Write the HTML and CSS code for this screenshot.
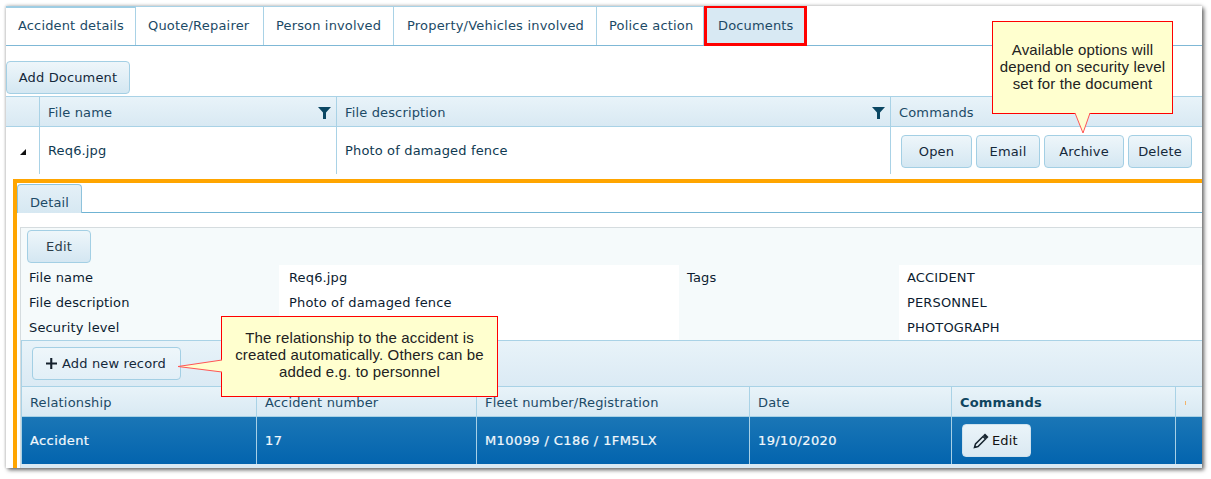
FILE: index.html
```html
<!DOCTYPE html>
<html lang="en">
<head>
<meta charset="utf-8">
<title>Documents</title>
<link rel="stylesheet" href="styles.css">
</head>
<body>
<div class="window">
  <nav class="tabs">
    <a class="tab tab-first">Accident details</a>
    <a class="tab">Quote/Repairer</a>
    <a class="tab">Person involved</a>
    <a class="tab">Property/Vehicles involved</a>
    <a class="tab">Police action</a>
    <a class="tab tab-active">Documents</a>
  </nav>
  <div class="toolbar-top"><button class="btn btn-add">Add Document</button></div>

  <div class="grid doc-grid head">
    <div class="cell"></div>
    <div class="cell filter-cell">File name
      <svg class="funnel" viewBox="0 0 13 13"><path d="M0 1h13L8 6.5V13H5V6.5z"/></svg></div>
    <div class="cell filter-cell">File description
      <svg class="funnel" viewBox="0 0 13 13"><path d="M0 1h13L8 6.5V13H5V6.5z"/></svg></div>
    <div class="cell">Commands</div>
  </div>
  <div class="grid doc-grid doc-row">
    <div class="cell expander"><svg class="arrow" viewBox="0 0 6 6"><path d="M6 0v6H0z"/></svg></div>
    <div class="cell">Req6.jpg</div>
    <div class="cell">Photo of damaged fence</div>
    <div class="cell commands">
      <button class="btn btn-open">Open</button>
      <button class="btn btn-email">Email</button>
      <button class="btn btn-archive">Archive</button>
      <button class="btn btn-delete">Delete</button>
    </div>
  </div>

  <section class="detail">
    <div class="detail-tabs"><a class="detail-tab">Detail</a></div>
    <div class="panel">
      <div class="panel-bar"><button class="btn btn-edit">Edit</button></div>
      <div class="form">
        <div class="f-label">File name</div><div class="f-value">Req6.jpg</div><div class="f-label f-tags">Tags</div><div class="f-value f-last">ACCIDENT</div>
        <div class="f-label">File description</div><div class="f-value">Photo of damaged fence</div><div class="f-label f-tags"></div><div class="f-value f-last">PERSONNEL</div>
        <div class="f-label">Security level</div><div class="f-value"></div><div class="f-label f-tags"></div><div class="f-value f-last">PHOTOGRAPH</div>
      </div>
      <div class="rec-bar">
        <button class="btn btn-new"><svg class="plus" viewBox="0 0 11 11"><path d="M4.2 0h2.1v4.4H11v2.1H6.3V11H4.2V6.5H0V4.4h4.2z"/></svg>Add new record</button>
      </div>
      <div class="grid rec-grid head rec-head">
        <div class="cell">Relationship</div>
        <div class="cell">Accident number</div>
        <div class="cell">Fleet number/Registration</div>
        <div class="cell">Date</div>
        <div class="cell strong">Commands</div>
        <div class="cell"><span class="tick"></span></div>
      </div>
      <div class="grid rec-grid rec-row">
        <div class="cell">Accident</div>
        <div class="cell">17</div>
        <div class="cell">M10099 / C186 / 1FM5LX</div>
        <div class="cell">19/10/2020</div>
        <div class="cell"><button class="btn btn-row"><svg class="pencil" viewBox="0 0 16 16"><path class="pencil-body" d="M10 3.5L2.5 11 1.5 14.5 5 13.5 12.5 6z"/><path d="M11 1.5l1-1 3.5 3.5-1 1-1 1L10 2.5z"/><path d="M1 15l.6-2.6 2 2z"/></svg>Edit</button></div>
        <div class="cell"></div>
      </div>
      <div class="rec-foot"></div>
    </div>
  </section>

  <aside class="callout callout-one">
    <svg class="tail tail-down" viewBox="0 0 16 21"><path d="M0 0L8 20 15 0" /></svg>
    Available options will<br>depend on security level<br>set for the document
  </aside>
  <aside class="callout callout-two">
    <svg class="tail tail-left" viewBox="0 0 46 14"><path d="M45 0L1 6.5 45 12" /></svg>
    The relationship to the accident is<br>created automatically. Others can be<br>added e.g. to personnel
  </aside>
</div>
</body>
</html>
```
FILE: styles.css
```css
* { box-sizing: border-box; }
html, body { margin: 0; background: #fff; }
body { padding: 6px 9px 11px 6px; height: 479px; overflow: hidden; font-family: "DejaVu Sans", Verdana, sans-serif; font-size: 13px; letter-spacing: .15px; color: #0f3a52; }

.window { position: relative; width: 1196px; height: 462px; background: #fff; box-shadow: 2px 2px 4px #666, 0 -1px 3px #ddd, -1px 0 2px #e4e4e4; }

.tabs { display: flex; height: 40px; border-bottom: 1px solid #7fb8d6; }
.tab { display: flex; align-items: center; padding: 0 12px 1px; border-right: 1px solid #a9d2e6; border-top: 1px solid #a9d2e6; color: #1c4a66; white-space: nowrap; letter-spacing: .2px; }
.tab-first { width: 130px; border-top: 2px solid #9fcde3; padding-bottom: 2px; letter-spacing: .15px; }
.tab:nth-child(2) { width: 128px; }
.tab:nth-child(3) { width: 130px; letter-spacing: .15px; }
.tab:nth-child(4) { width: 203px; padding-left: 13px; }
.tab:nth-child(5) { width: 107px; }
.tab-active { position: relative; width: 103px; height: 40px; margin-bottom: -1px; background: #d8e9f3; border: 3px solid #f00; border-top-width: 2px; padding: 0 11px 1px; letter-spacing: .15px; }

.toolbar-top { padding: 15px 0 2px; height: 50px; }
.btn { font: inherit; letter-spacing: inherit; color: #14283a; border: 1px solid #a3cfe4; border-radius: 4px; background: linear-gradient(#eef6fa, #d4e7f2); height: 33px; padding: 0; cursor: pointer; }
.btn-add { width: 124px; display: block; }

.grid { display: grid; }
.doc-grid { grid-template-columns: 34px 297px 554px 1fr; }
.rec-grid { grid-template-columns: 235px 220px 273px 202px 224px 1fr; }
.cell { display: flex; align-items: center; padding: 0 8px; border-right: 1px solid #a9d2e6; white-space: nowrap; min-width: 0; }
.cell:last-child { border-right: 0; }
.head { height: 31px; border-top: 1px solid #a9d2e6; border-bottom: 1px solid #a9d2e6; background: linear-gradient(#e8f3f9, #d9e9f3); color: #1c4a66; }
.head .cell { padding-left: 8px; padding-top: 2px; }
.filter-cell { justify-content: space-between; padding-right: 5px; }
.funnel { width: 13px; height: 13px; fill: #0b4763; }
.doc-row { height: 47px; margin-bottom: 5px; }
.expander { justify-content: center; padding: 3px 0 0; }
.arrow { width: 6px; height: 6px; fill: #111; margin-left: 1px; }
.commands { gap: 4px; padding: 0 0 0 10px; }
.commands .btn { height: 33px; margin-top: 1px; }
.btn-open { width: 71px; }
.btn-email { width: 64px; }
.btn-archive { width: 80px; }
.btn-delete { width: 64px; }

.detail { margin-left: 7px; height: 289px; overflow: hidden; border-top: 4px solid #ffa500; border-left: 4px solid #ffa500; background: #fff; }
.detail-tabs { height: 30px; border-bottom: 1px solid #6fb3d3; padding-top: 1px; }
.detail-tab { display: flex; align-items: center; justify-content: center; width: 65px; height: 29px; padding-top: 6px; background: linear-gradient(#e4f0f7, #d6e8f2); border: 1px solid #8fc3dc; border-bottom: 0; border-radius: 4px 4px 0 0; color: #1c4a66; }

.panel { margin: 14px 0 0 3px; height: 245px; background: #f5fafb; border-top: 1px solid #d5dcdf; border-left: 1px solid #d5dcdf; }
.panel-bar { height: 37px; padding: 2px 0 0 6px; }
.btn-edit { width: 64px; color: #2b3d49; }
.form { display: grid; grid-template-columns: 258px 400px 220px 1fr; grid-auto-rows: 25px; height: 75px; color: #0c1c30; }
.f-label, .f-value { display: flex; align-items: center; padding-left: 8px; white-space: nowrap; }
.f-value { background: #fff; padding-left: 10px; }
.f-value.f-last { padding-left: 8px; }
.rec-bar { height: 46px; padding: 6px 0 0 10px; border-top: 1px solid #a9d2e6; border-left: 1px solid #a9d2e6; background: linear-gradient(#e8f3f9, #dbeaf4); }
.btn-new { display: flex; align-items: center; width: 149px; padding-left: 13px; background: linear-gradient(#eef6fa, #e2eff7); }
.plus { width: 11px; height: 11px; fill: #14202c; margin-right: 5px; }
.rec-head { border-left: 1px solid #a9d2e6; }
.strong { font-weight: bold; color: #0f4560; }
.tick { width: 1px; height: 4px; margin-left: 1px; background: #f2b36a; }
.rec-row { height: 47px; border-left: 1px solid #a9d2e6; background: linear-gradient(#1a76b6, #0364ae); color: #f2f8fc; letter-spacing: .4px; -webkit-text-stroke: 0.2px #f2f8fc; }
.rec-row .cell { border-right-color: #a7d0e6; }
.rec-row .cell .btn-row { margin-left: 2px; }
.btn-row { display: flex; align-items: center; width: 69px; padding-left: 10px; color: #111; letter-spacing: .15px; -webkit-text-stroke: 0; border-color: #cfe2ee; background: linear-gradient(#eaf4f9, #dbe9f2); }
.pencil { width: 16px; height: 16px; fill: #16242f; margin-right: 3px; }
.pencil-body { fill: none; stroke: #16242f; stroke-width: 1.5; }
.rec-foot { height: 4px; background: #d9e9f3; }

.callout { position: absolute; text-align: center; background: #ffffcf; border: 1px solid #f00; font-family: "Liberation Sans", Arial, sans-serif; font-size: 15px; letter-spacing: .15px; line-height: 17px; color: #222; }
.callout-one { left: 986px; top: 15px; width: 181px; height: 93px; padding-top: 19px; }
.callout-two { left: 215px; top: 310px; width: 277px; height: 81px; padding-top: 12px; }
.tail { position: absolute; fill: #ffffcf; stroke: #f55; stroke-width: 1; overflow: visible; }
.tail-down { left: 82px; top: 91px; width: 16px; height: 21px; }
.tail-left { left: -45px; top: 43px; width: 46px; height: 14px; }
```
